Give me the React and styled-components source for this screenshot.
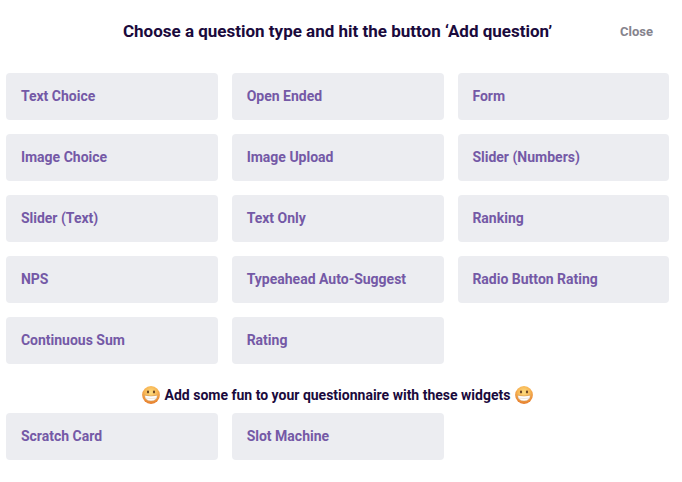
import React from 'react';
import styled, { createGlobalStyle } from 'styled-components';

const QUESTION_TYPES = [
  'Text Choice',
  'Open Ended',
  'Form',
  'Image Choice',
  'Image Upload',
  'Slider (Numbers)',
  'Slider (Text)',
  'Text Only',
  'Ranking',
  'NPS',
  'Typeahead Auto-Suggest',
  'Radio Button Rating',
  'Continuous Sum',
  'Rating',
];
const WIDGETS = ['Scratch Card', 'Slot Machine'];

const GlobalStyle = createGlobalStyle`
  html, body {
    margin: 0;
    background: #fff;
  }
  body {
    font-family: Roboto, "Liberation Sans", sans-serif;
  }
`;

const Page = styled.div`
  width: 682px;
  height: 482px;
  box-sizing: border-box;
  padding: 0 13px 0 6px;
  overflow: hidden;
`;
const Header = styled.header`
  display: grid;
  grid-template-columns: 1fr auto 1fr;
  align-items: center;
  height: 73px;
  padding-bottom: 11px;
  box-sizing: border-box;
`;
const Title = styled.h1`
  grid-column: 2;
  margin: 0;
  font-size: 17px;
  font-weight: 700;
  color: #1a0a3c;
`;
const Close = styled.button`
  grid-column: 3;
  justify-self: end;
  margin-right: 16px;
  padding: 0;
  border: 0;
  background: none;
  font: 700 13px Roboto, sans-serif;
  color: #85838d;
`;
const Grid = styled.div`
  display: grid;
  grid-template-columns: repeat(3, 211.75px);
  grid-auto-rows: 47px;
  gap: 14px;
`;
const Card = styled.div`
  display: flex;
  align-items: center;
  padding: 0 0 2px 14.9px;
  border-radius: 4px;
  background: #ecedf1;
  font-size: 14px;
  font-weight: 700;
  color: #7459a6;
`;
const Subtitle = styled.h2`
  display: flex;
  justify-content: center;
  align-items: center;
  gap: 5px;
  height: 49px;
  box-sizing: border-box;
  padding-top: 12px;
  margin: 0;
  font-size: 14px;
  font-weight: 700;
  color: #1a0a3c;
`;

const Grin = () => (
  <svg width="18" height="18" viewBox="0 0 18 18">
    <defs>
      <radialGradient id="grinFace" cx="50%" cy="35%" r="62%">
        <stop offset="0%" stopColor="#fcdc80" />
        <stop offset="55%" stopColor="#f8b856" />
        <stop offset="100%" stopColor="#e67f2e" />
      </radialGradient>
    </defs>
    <circle cx="9" cy="9" r="8.9" fill="url(#grinFace)" />
    <ellipse cx="6" cy="6" rx="1.1" ry="1.4" fill="#6b4522" />
    <ellipse cx="12" cy="6" rx="1.1" ry="1.4" fill="#6b4522" />
    <path d="M2.6 9.2 Q9 11 15.4 9.2 Q15 15 9 15 Q3 15 2.6 9.2Z" fill="#fff" stroke="#c08244" strokeWidth="0.4" />
    <path d="M3 12 Q9 13 15 12" fill="none" stroke="#d8cbbb" strokeWidth="0.5" />
  </svg>
);

const App = () => (
  <Page>
    <GlobalStyle />
    <Header>
      <Title>Choose a question type and hit the button ‘Add question’</Title>
      <Close>Close</Close>
    </Header>
    <Grid>
      {QUESTION_TYPES.map((name) => (
        <Card key={name}>{name}</Card>
      ))}
    </Grid>
    <Subtitle>
      <Grin />
      Add some fun to your questionnaire with these widgets
      <Grin />
    </Subtitle>
    <Grid>
      {WIDGETS.map((name) => (
        <Card key={name}>{name}</Card>
      ))}
    </Grid>
  </Page>
);

export default App;
